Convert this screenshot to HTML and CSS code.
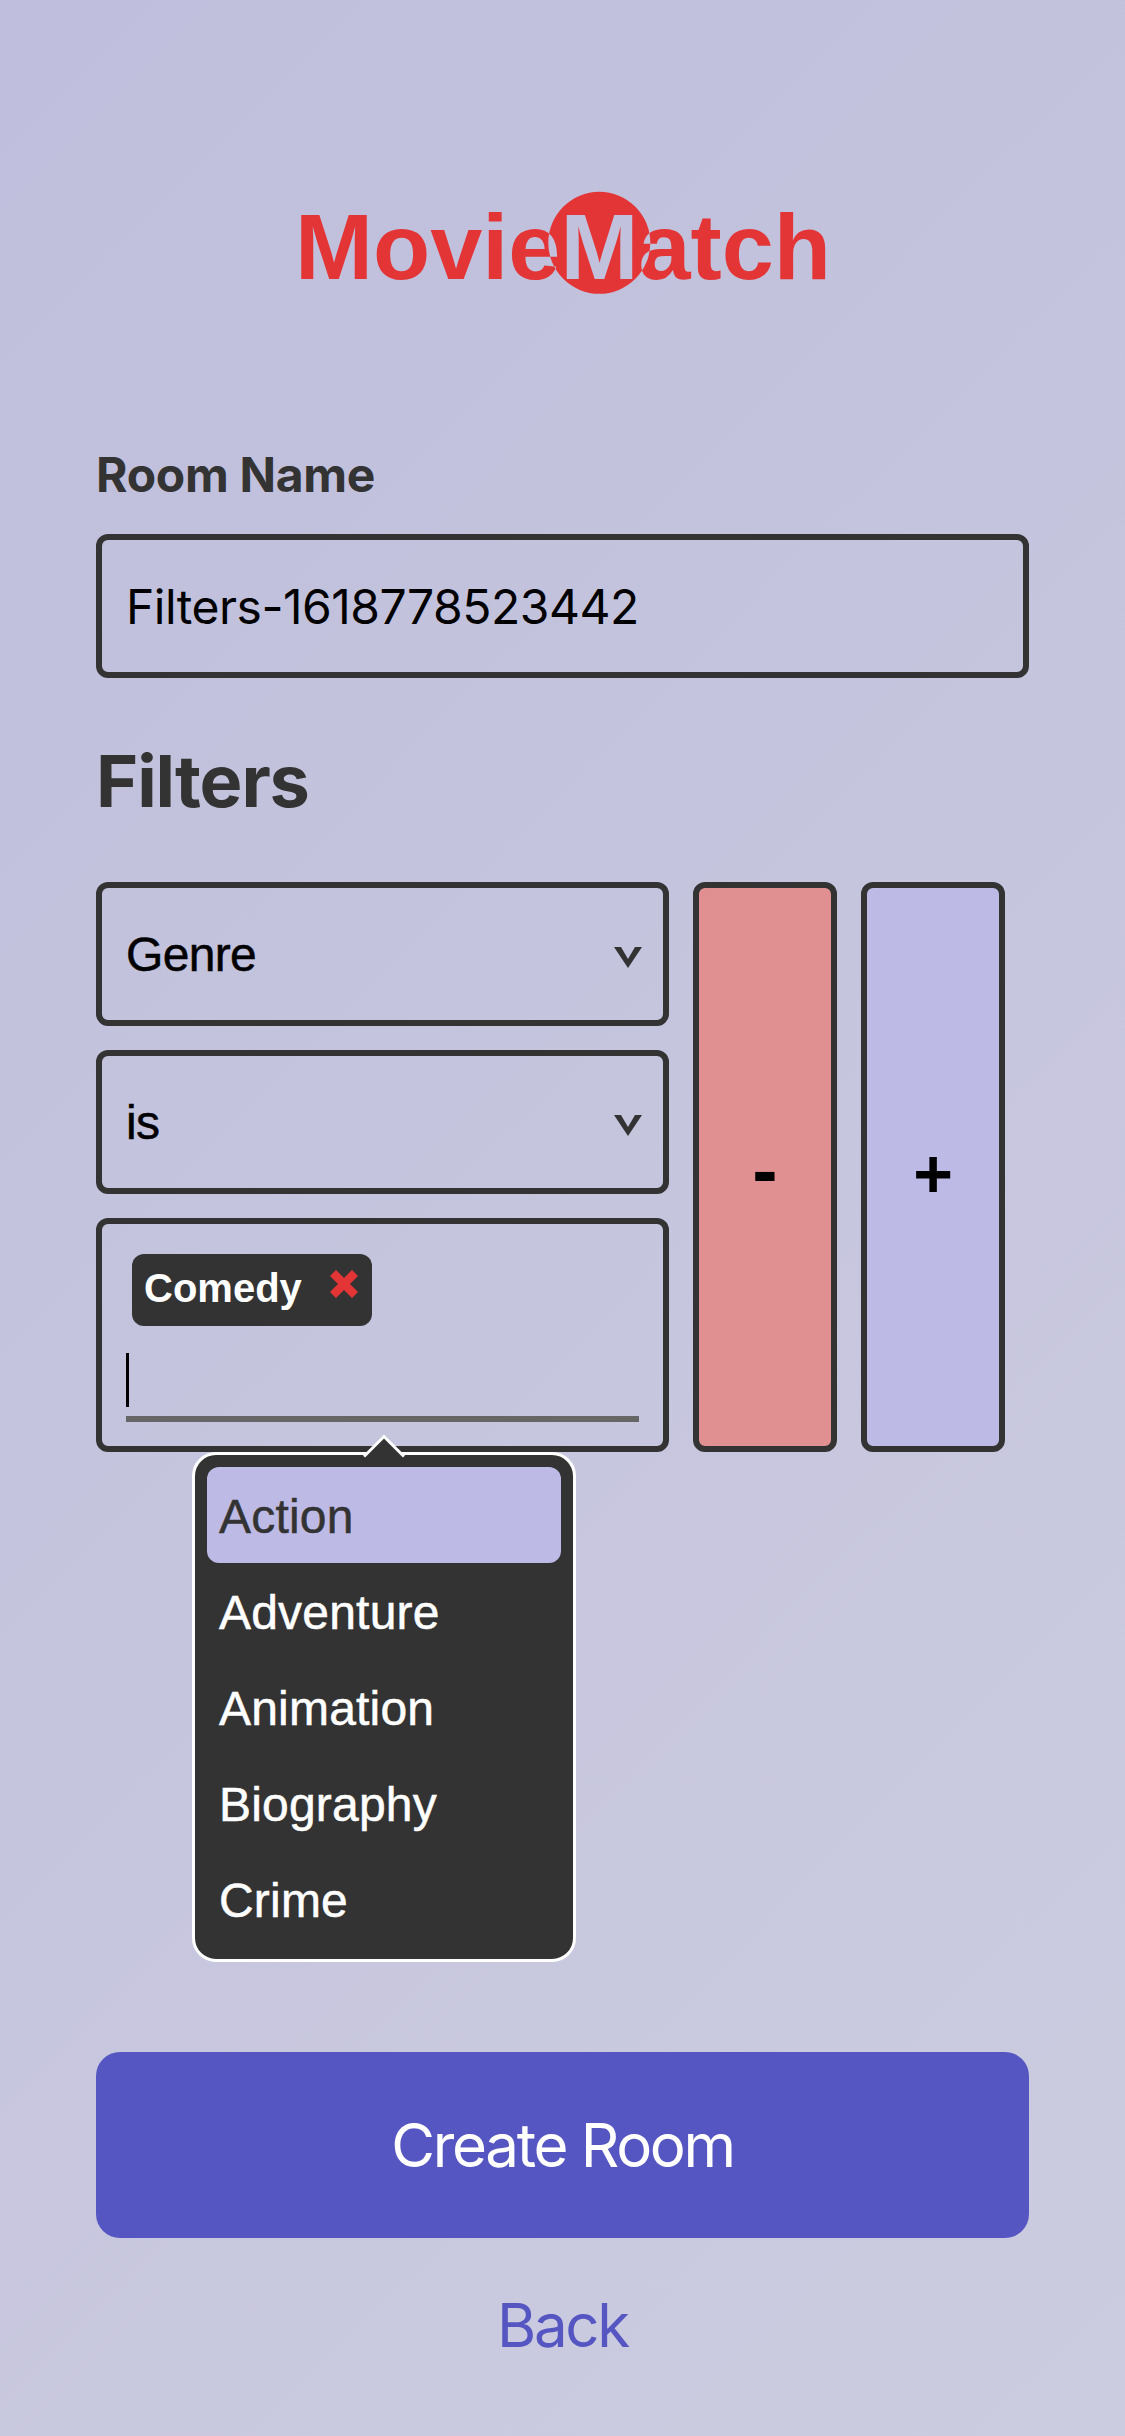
FILE: index.html
```html
<!DOCTYPE html>
<html lang="en">
<head>
<meta charset="utf-8">
<title>MovieMatch</title>
<link rel="stylesheet" href="styles.css">
</head>
<body>
<main class="page">
  <svg class="logo" viewBox="0 0 540 120" role="img" aria-label="MovieMatch">
    <defs>
      <mask id="outside-disc" maskUnits="userSpaceOnUse" x="0" y="0" width="540" height="120">
        <rect width="540" height="120" fill="#fff"/>
        <circle cx="307.3" cy="59.8" r="51" fill="#000"/>
      </mask>
      <mask id="outside-text" maskUnits="userSpaceOnUse" x="0" y="0" width="540" height="120">
        <rect width="540" height="120" fill="#fff"/>
        <use href="#wordmark" fill="#000"/>
      </mask>
    </defs>
    <g mask="url(#outside-disc)" fill="#e43536">
      <text id="wordmark" class="wordmark" x="3" y="95.7" textLength="536" lengthAdjust="spacingAndGlyphs">MovieMatch</text>
    </g>
    <circle cx="307.3" cy="59.8" r="51" fill="#e43536" mask="url(#outside-text)"/>
  </svg>

  <form class="form">
    <label class="label" for="room">Room Name</label>
    <input class="field room" id="room" type="text" value="Filters-1618778523442">

    <h2 class="heading">Filters</h2>
    <div class="filter">
      <div class="rules">
        <div class="field select">
          <span>Genre</span>
          <svg class="chevron" viewBox="0 0 28 21"><path d="M0 0H7L14 12L21 0H28L14 21Z"/></svg>
        </div>
        <div class="field select">
          <span>is</span>
          <svg class="chevron" viewBox="0 0 28 21"><path d="M0 0H7L14 12L21 0H28L14 21Z"/></svg>
        </div>
        <div class="field values">
          <div class="chip">
            <span class="chip-text">Comedy</span>
            <svg class="remove" viewBox="0 0 28 28"><path d="M3 3L25 25M25 3L3 25"/></svg>
          </div>
          <div class="entry"><span class="caret"></span></div>
          <div class="menu">
            <svg class="pointer" viewBox="0 0 42 24"><path d="M1 22L21 2L41 22V24H1Z" fill="#333"/><path d="M1 22.5L21 2.5L41 22.5" fill="none" stroke="#fff" stroke-width="3"/></svg>
            <ul class="options">
              <li class="option active">Action</li>
              <li class="option">Adventure</li>
              <li class="option">Animation</li>
              <li class="option">Biography</li>
              <li class="option">Crime</li>
            </ul>
          </div>
        </div>
      </div>
      <button class="step minus" type="button">-</button>
      <button class="step plus" type="button">+</button>
    </div>

    <button class="create" type="button">Create Room</button>
    <a class="back">Back</a>
  </form>
</main>
</body>
</html>
```
FILE: styles.css
```css
* {
  box-sizing: border-box;
}

body {
  margin: 0;
  font-family: Inter, "Liberation Sans", sans-serif;
  font-size: 48px;
  color: #333;
}

.page {
  display: flex;
  flex-direction: column;
  height: 2436px;
  padding: 183px 96px 0;
  background: linear-gradient(135deg, #bfbedc, #cccce0);
}

.logo {
  display: block;
  width: 540px;
  height: 120px;
  margin-left: 196px;
  overflow: visible;
}

.wordmark {
  font: bold 92px "Liberation Sans", Arial, sans-serif;
}

.form {
  display: flex;
  flex-direction: column;
  margin-top: 143px;
}

.label {
  height: 58px;
  line-height: 58px;
  font-weight: 700;
  letter-spacing: -0.3px;
}

.field {
  border: 6px solid #333;
  border-radius: 12px;
  background: transparent;
}

.room {
  height: 144px;
  margin-top: 30px;
  padding: 0 24px;
  font: 48px Inter, sans-serif;
  letter-spacing: -0.5px;
  color: #000;
  outline: 0;
}

.heading {
  height: 88px;
  margin: 59px 0 0;
  line-height: 88px;
  font-size: 72px;
  font-weight: 700;
  letter-spacing: -1.1px;
}

.filter {
  display: flex;
  gap: 24px;
  height: 570px;
  margin-top: 57px;
}

.rules {
  display: flex;
  flex-direction: column;
  gap: 24px;
  width: 573px;
  font-family: "Liberation Sans", Arial, sans-serif;
}

.select {
  display: flex;
  align-items: center;
  justify-content: space-between;
  height: 144px;
  padding: 1px 21px 0 24px;
  font-size: 48px;
  letter-spacing: -0.7px;
  color: #000;
  -webkit-text-stroke: 0.5px;
}

.chevron {
  width: 28px;
  height: 21px;
  margin-top: 5px;
  fill: #333;
}

.values {
  position: relative;
  height: 234px;
  padding: 30px 24px;
}

.chip {
  display: flex;
  align-items: center;
  justify-content: space-between;
  width: 240px;
  height: 72px;
  margin-left: 6px;
  padding: 0 14px 0 12px;
  border-radius: 12px;
  background: #333;
  color: #fff;
  font-size: 40px;
  font-weight: 700;
}

.chip-text {
  margin-bottom: 3px;
}

.remove {
  width: 28px;
  height: 28px;
  margin-bottom: 12px;
  fill: none;
  stroke: #e43536;
  stroke-width: 8.5;
}

.entry {
  height: 69px;
  margin-top: 27px;
  border-bottom: 6px solid #666;
}

.caret {
  display: block;
  width: 3px;
  height: 54px;
  background: #000;
}

/* Suggestions float over the page below the values box. */
.menu {
  position: absolute;
  top: 228px;
  left: 90px;
  width: 384px;
  height: 510px;
  padding: 12px;
  border: 3px solid #fff;
  border-radius: 24px;
  background: #333;
}

.pointer {
  position: absolute;
  top: -21px;
  left: 168px;
  width: 42px;
  height: 24px;
}

.options {
  margin: 0;
  padding: 0;
  list-style: none;
}

.option {
  height: 96px;
  padding-left: 12px;
  border-radius: 12px;
  line-height: 100px;
  font-size: 48px;
  letter-spacing: 0.2px;
  color: #fff;
  -webkit-text-stroke: 0.5px;
}

.active {
  background: #bdbbe6;
  color: #333;
}

.step {
  width: 144px;
  padding: 11px 0 0;
  border: 6px solid #333;
  border-radius: 12px;
  font: bold 68px "Liberation Sans", Arial, sans-serif;
  color: #000;
}

.minus {
  padding-top: 4px;
  background: #e09090;
  font-size: 76px;
}

.plus {
  background: #bdbbe6;
}

.create {
  height: 186px;
  margin-top: 600px;
  padding: 0;
  border: 0;
  border-radius: 24px;
  background: #5656c3;
  font: 60px Inter, sans-serif;
  letter-spacing: -2.3px;
  color: #fff;
}

.back {
  margin-top: 50px;
  text-align: center;
  line-height: 74px;
  font-size: 60px;
  letter-spacing: -2.3px;
  color: #5656c3;
}
```
